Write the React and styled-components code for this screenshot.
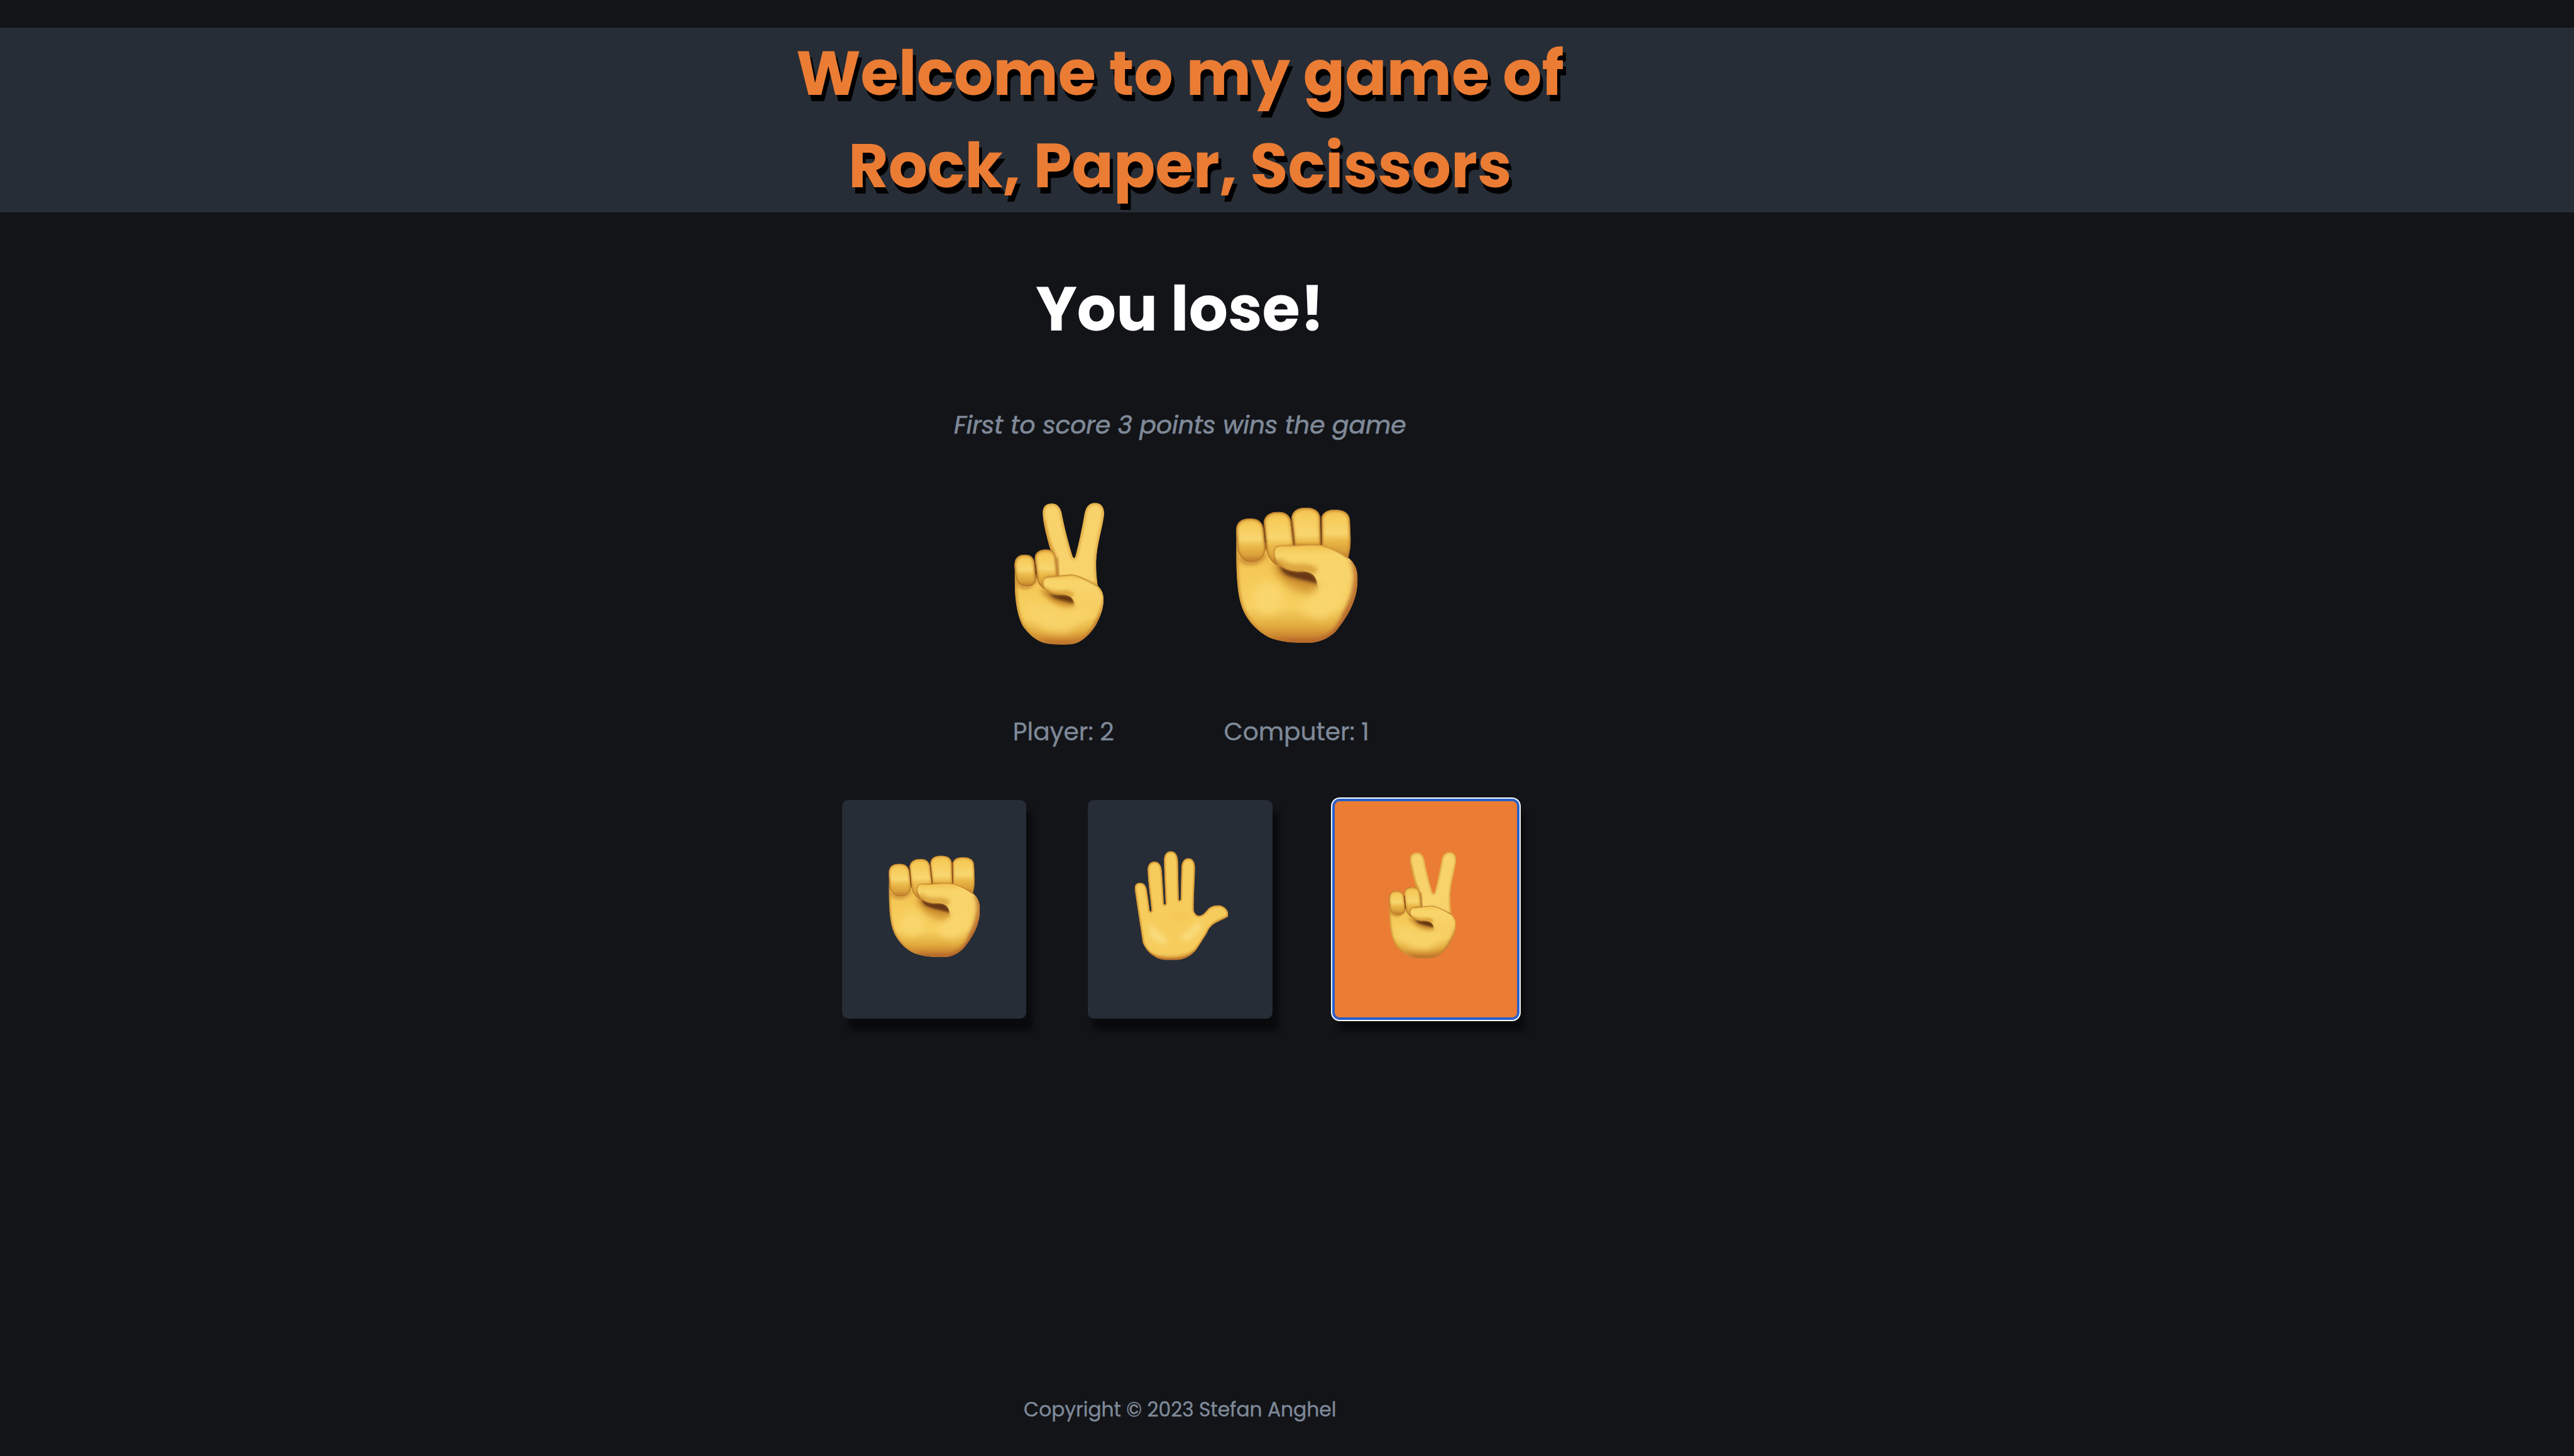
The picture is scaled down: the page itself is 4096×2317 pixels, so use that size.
import React from "react";
import styled, { createGlobalStyle, css } from "styled-components";

const GlobalStyle = createGlobalStyle`
  html { font-size: calc(100vw / 418.6); background: #121418; }
  body { margin: 0; background: #121418; font-family: Poppins, Inter, "Open Sans", sans-serif; }
  *, *::before, *::after { box-sizing: border-box; }
`;

const Page = styled.div`
  display: flex;
  flex-direction: column;
  height: 100vh;
  padding-top: 4.5rem;
  overflow: hidden;
  color: #7f8998;
`;

const Header = styled.header`
  flex: none;
  height: 30rem;
  background: #272d36;
`;

const Title = styled.h1`
  width: 383.8rem;
  margin: 0;
  font-size: 10rem;
  font-weight: 700;
  line-height: 15rem;
  text-align: center;
  color: #eb7c34;
  text-shadow: 0.5rem 1rem 0 #000;
`;

const Main = styled.main`
  display: flex;
  flex: 1;
  flex-direction: column;
  align-items: center;
  width: 383.8rem;
  padding-top: 8.3rem;
`;

const Result = styled.h2`
  margin: 0;
  font-size: 10rem;
  font-weight: 700;
  line-height: 15rem;
  color: #fff;
`;

const Rule = styled.p`
  margin: 8.4rem 0 0;
  font-size: 4rem;
  font-style: italic;
  line-height: 6rem;
  -webkit-text-stroke: 0.07rem currentColor;
`;

const Scoreboard = styled.section`
  display: grid;
  grid-template-columns: repeat(2, 37.9rem);
  margin-top: 5.8rem;
`;

const Contestant = styled.div`
  display: flex;
  flex-direction: column;
  align-items: center;
  gap: 8.15rem;
`;

const Score = styled.p`
  margin: 0;
  font-size: 4rem;
  line-height: 6rem;
  -webkit-text-stroke: 0.04rem currentColor;
`;

const Choices = styled.div`
  display: flex;
  gap: 10rem;
  margin-top: 7.95rem;
`;

const Choice = styled.button`
  display: flex;
  justify-content: center;
  width: 30rem;
  height: 35.6rem;
  padding: 5.6rem 0 0;
  border: 0;
  border-radius: 1rem;
  background: #272d36;
  box-shadow: 1rem 2rem 1rem rgba(0, 0, 0, 0.5);
  ${(p) =>
    p.$active &&
    css`
      background: #eb7c34;
      box-shadow: inset 0 0 0 0.2rem #255fcc, 0 0 0 0.2rem #255fcc, 0 0 0 0.4rem #fff,
        1rem 2rem 1rem rgba(0, 0, 0, 0.5);
    `}
`;

const Footer = styled.footer`
  width: 383.8rem;
  padding-bottom: 5.15rem;
  font-size: 3.2rem;
  line-height: 4.8rem;
  text-align: center;
  -webkit-text-stroke: 0.04rem currentColor;
`;

const Glyph = styled.svg`
  display: block;
  flex: none;
  width: ${(p) => (p.$small ? "22.5rem" : "30rem")};
  height: ${(p) => (p.$small ? "22.5rem" : "30rem")};
`;

function Shades({ id, top, bottom }) {
  return (
    <>
      <linearGradient id={id + "skin"} gradientUnits="userSpaceOnUse" x1="0" x2="0" y1={top} y2={bottom}>
        <stop offset="0" stopColor="#e6ad40" />
        <stop offset="0.35" stopColor="#f5c957" />
        <stop offset="0.68" stopColor="#f6cf60" />
        <stop offset="0.85" stopColor="#e2ac3f" />
        <stop offset="0.94" stopColor="#cd8731" />
        <stop offset="1" stopColor="#b2642a" />
      </linearGradient>
      <linearGradient id={id + "finger"} x1="0" x2="0" y1="0" y2="1">
        <stop offset="0" stopColor="#f0bf4e" />
        <stop offset="0.16" stopColor="#f6cb5a" />
        <stop offset="0.48" stopColor="#f8d66f" />
        <stop offset="0.64" stopColor="#ebb949" />
        <stop offset="0.85" stopColor="#d9a03a" />
        <stop offset="1" stopColor="#b87028" />
      </linearGradient>
      <linearGradient id={id + "long"} x1="0" x2="0" y1="0" y2="1">
        <stop offset="0" stopColor="#f0bf4e" />
        <stop offset="0.2" stopColor="#f6cb5a" />
        <stop offset="0.7" stopColor="#f8d66f" />
        <stop offset="0.88" stopColor="#ecbd4e" />
        <stop offset="1" stopColor="#d39633" />
      </linearGradient>
      {[3, 6, 12, 22].map((b) => (
        <filter key={b} id={id + "b" + b} x="-60%" y="-60%" width="220%" height="220%">
          <feGaussianBlur stdDeviation={b} />
        </filter>
      ))}
    </>
  );
}

function Digit({ id, d, n, shade = "finger" }) {
  const clip = `${id}d${n}`;
  return (
    <g clipPath={`url(#${clip})`}>
      <clipPath id={clip}>
        <path d={d} />
      </clipPath>
      <path d={d} fill={`url(#${id}${shade})`} />
      <path d={d} fill="none" stroke="#cf9132" strokeWidth="15" filter={`url(#${id}b6)`} />
      <path d={d} fill="none" stroke="#93521c" strokeWidth="4" filter={`url(#${id}b3)`} />
    </g>
  );
}

const FIST = {
  palm: "M122 255L122 400C124 480 129 560 146 612C170 690 230 745 285 772C330 790 390 797 430 797L485 797C545 793 590 762 615 732C670 660 714 590 714 480C714 430 690 400 665 380L540 320L300 330L255 300Z",
  fingers: [
    ["M391 195C391 150 425 137 462 137C505 137 530 155 532 190L536 325L406 325Z", "long"],
    ["M537 190C540 160 570 147 602 147C650 147 677 165 677 205L681 290C681 330 675 360 668 385L538 330Z", "finger"],
    ["M256 215C256 175 290 158 325 158C365 158 388 175 391 215L404 325L330 335C310 350 305 390 326 420C290 405 272 370 268 330Z", "finger"],
    ["M121 252C121 205 150 190 190 190C230 190 253 207 257 250L265 330C266 375 235 402 197 402C155 402 135 370 128 340Z", "finger"],
  ],
  gaps: "M257 215L268 345M392 190L405 322M535 180L537 322",
  thumb: "M305 355C305 325 322 320 345 321L410 321C450 316 510 315 540 320C600 335 640 360 668 382C700 405 714 440 714 490C714 560 690 620 650 670C600 690 540 600 516 510C515 475 490 450 455 449C400 452 360 445 330 415C315 400 305 380 305 355Z",
  thumbLine: "M668 384C640 362 600 335 540 320C510 315 450 316 410 321L345 321C322 320 305 325 305 355C305 380 315 400 330 415C360 445 400 452 455 449",
  cavity: "M335 420C370 450 420 452 455 449C495 452 515 480 516 508C480 494 420 486 375 468C350 456 340 440 335 420Z",
  underThumb: "M318 395C350 430 400 436 450 432C475 432 495 440 510 452",
};

function Fist({ id, small }) {
  return (
    <Glyph $small={small} viewBox="-35 0 900 900" role="img" aria-label="rock">
      <defs>
        <Shades id={id} top={250} bottom={797} />
        <clipPath id={id + "palm"}>
          <path d={FIST.palm} />
        </clipPath>
        <clipPath id={id + "thumb"}>
          <path d={FIST.thumb} />
        </clipPath>
        <linearGradient id={id + "fade"} gradientUnits="userSpaceOnUse" x1="0" x2="0" y1="320" y2="640">
          <stop offset="0" stopColor="#f2c24f" />
          <stop offset="0.15" stopColor="#f8d56b" />
          <stop offset="0.5" stopColor="#f8d46b" />
          <stop offset="1" stopColor="#f8d46b" stopOpacity="0" />
        </linearGradient>
      </defs>
      <g clipPath={`url(#${id}palm)`}>
        <path d={FIST.palm} fill={`url(#${id}skin)`} />
        <path d="M300 430C360 530 440 570 530 550L500 480L330 400Z" fill="#d39733" filter={`url(#${id}b22)`} />
        <ellipse cx="275" cy="580" rx="72" ry="80" fill="#f9d66d" filter={`url(#${id}b22)`} />
        <path d="M440 620L640 420L670 480L640 600L550 680L460 660Z" fill="#f9d66d" filter={`url(#${id}b22)`} />
        <path d={FIST.palm} fill="none" stroke="#cf8f31" strokeWidth="18" filter={`url(#${id}b6)`} />
        <path d="M705 400C735 520 695 620 625 728C580 785 530 800 480 804L290 800" fill="none" stroke="#b2642a" strokeWidth="40" filter={`url(#${id}b12)`} />
        <path d="M140 380C160 412 220 422 262 365" fill="none" stroke="#bd7a2a" strokeWidth="18" filter={`url(#${id}b12)`} />
      </g>
      {FIST.fingers.map(([d, shade], i) => (
        <Digit key={i} id={id} n={i} d={d} shade={shade} />
      ))}
      <path d={FIST.gaps} fill="none" stroke="#8a4c1b" strokeWidth="5" filter={`url(#${id}b3)`} />
      <path d={FIST.cavity} fill="#b06a26" stroke="#b87a2c" strokeWidth="22" filter={`url(#${id}b12)`} />
      <path d={FIST.cavity} fill="#683812" filter={`url(#${id}b6)`} />
      <g clipPath={`url(#${id}thumb)`}>
        <path d={FIST.thumb} fill={`url(#${id}fade)`} />
        <path d={FIST.underThumb} fill="none" stroke="#dba43c" strokeWidth="40" filter={`url(#${id}b12)`} />
        <path d="M690 385C722 430 726 560 655 680" fill="none" stroke="#b9702b" strokeWidth="34" filter={`url(#${id}b12)`} />
        <path d={FIST.thumbLine} fill="none" stroke="#b87528" strokeWidth="7" filter={`url(#${id}b3)`} />
      </g>
    </Glyph>
  );
}

const VICTORY = {
  raised: "M285 165C285 130 303 117 330 117C355 117 372 135 378 165C392 240 412 315 431 375Q438 391 445 375C462 310 477 240 490 165C497 130 515 114 540 114C570 114 586 135 585 170C577 240 550 310 546 400C545 450 550 490 554 520L430 475L350 480L340 360L322 340C308 290 288 220 285 165Z",
  palm: "M148 410L149 520C150 600 165 680 193 722C225 765 265 795 310 801C350 807 400 806 430 803C480 795 520 750 545 710C570 665 581 625 582 585C581 550 570 535 553 518L430 465L290 480L240 460Z",
  fingers: [
    ["M246 385C246 352 275 341 300 341C330 341 348 355 350 385L359 475L310 480C290 495 282 510 294 536C270 520 260 505 257 480Z", "finger"],
    ["M147 420C147 380 168 366 197 366C228 366 244 380 247 415L253 480C253 510 230 522 205 522C175 522 158 500 153 480Z", "finger"],
  ],
  thumb: "M284 505C284 480 295 475 315 474C350 473 400 463 430 464C470 468 520 500 553 518C575 540 582 560 582 585C582 630 570 670 540 700C500 690 460 660 438 608C438 580 415 565 395 564C350 566 320 560 300 540C288 528 284 520 284 505Z",
  thumbLine: "M555 520C520 500 470 468 430 464C400 463 350 473 315 474C295 475 284 480 284 505C284 520 288 528 300 540C320 560 350 566 395 564",
  cavity: "M310 548C330 564 365 566 395 564C425 566 438 585 438 605C405 592 360 588 335 573Z",
};

function Victory({ id, small }) {
  return (
    <Glyph $small={small} viewBox="-62 0 900 900" role="img" aria-label="scissors">
      <defs>
        <Shades id={id} top={380} bottom={806} />
        {["raised", "palm", "thumb"].map((k) => (
          <clipPath key={k} id={id + k}>
            <path d={VICTORY[k]} />
          </clipPath>
        ))}
        <linearGradient id={id + "fade"} gradientUnits="userSpaceOnUse" x1="0" x2="0" y1="464" y2="690">
          <stop offset="0" stopColor="#f3c450" />
          <stop offset="0.15" stopColor="#f8d56b" />
          <stop offset="0.5" stopColor="#f7d066" />
          <stop offset="1" stopColor="#f7d066" stopOpacity="0" />
        </linearGradient>
      </defs>
      <g clipPath={`url(#${id}raised)`}>
        <path d={VICTORY.raised} fill="#f8d36c" />
        <path d={VICTORY.raised} fill="none" stroke="#dba43c" strokeWidth="16" filter={`url(#${id}b6)`} />
        <path d="M288 200C300 280 320 330 335 350" fill="none" stroke="#d39530" strokeWidth="16" filter={`url(#${id}b6)`} />
        <path d="M352 380L361 480" fill="none" stroke="#a5641f" strokeWidth="10" filter={`url(#${id}b6)`} />
        <path d="M560 350L560 520" fill="none" stroke="#c98c2e" strokeWidth="22" filter={`url(#${id}b12)`} />
      </g>
      <g clipPath={`url(#${id}palm)`}>
        <path d={VICTORY.palm} fill={`url(#${id}skin)`} />
        <path d="M270 540C320 605 380 635 440 620L410 570L300 530Z" fill="#d49a36" filter={`url(#${id}b12)`} />
        <path d="M200 600C260 580 380 680 440 640L500 600L500 680L400 750L300 740L220 680Z" fill="#f8d369" filter={`url(#${id}b22)`} />
        <path d={VICTORY.palm} fill="none" stroke="#cf9030" strokeWidth="17" filter={`url(#${id}b6)`} />
        <path d="M592 580C582 680 520 795 430 812L280 806" fill="none" stroke="#b86c29" strokeWidth="22" filter={`url(#${id}b12)`} />
        <path d="M155 500C180 540 220 540 255 490" fill="none" stroke="#c98a30" strokeWidth="12" filter={`url(#${id}b6)`} />
      </g>
      {VICTORY.fingers.map(([d, shade], i) => (
        <Digit key={i} id={id} n={i} d={d} shade={shade} />
      ))}
      <path d="M247 400L256 485" fill="none" stroke="#8a4c1b" strokeWidth="5" filter={`url(#${id}b3)`} />
      <path d={VICTORY.cavity} fill="#a7651f" stroke="#b87a2c" strokeWidth="12" filter={`url(#${id}b12)`} />
      <path d={VICTORY.cavity} fill="#643611" filter={`url(#${id}b6)`} />
      <g clipPath={`url(#${id}thumb)`}>
        <path d={VICTORY.thumb} fill={`url(#${id}fade)`} />
        <path d="M294 535C320 556 350 558 395 554C410 554 422 560 432 568" fill="none" stroke="#dfa840" strokeWidth="26" filter={`url(#${id}b6)`} />
        <path d="M560 518C582 540 590 560 590 585C590 630 574 674 544 706" fill="none" stroke="#cf8f30" strokeWidth="18" filter={`url(#${id}b6)`} />
        <path d={VICTORY.thumbLine} fill="none" stroke="#b07026" strokeWidth="7" filter={`url(#${id}b3)`} />
      </g>
    </Glyph>
  );
}

const HAND =
  "M315 525C315 505 325 496 340 496C358 496 370 508 374 530C380 570 386 610 388 632Q393 642 397 632C392 570 380 500 378 435C378 408 392 393 411 393C432 393 445 410 447 438C452 500 455 560 457 598Q461 608 466 598C464 540 459 450 458 385C458 358 472 342 491 342C510 342 524 358 526 388L530 578Q534 588 539 578L543 420C545 393 558 377 577 377C597 377 609 395 609 422C609 480 602 560 603 630C608 650 620 658 630 657C650 655 660 638 675 622C690 608 710 605 730 607C752 611 768 628 771 645L771 660C755 672 725 682 705 695C685 708 675 722 668 740C650 770 630 800 617 820C595 850 560 870 520 873L460 873C420 868 375 840 355 790C345 720 325 600 315 525Z";

function Hand({ id, small }) {
  return (
    <Glyph $small={small} viewBox="199.5 261 675 675" role="img" aria-label="paper">
      <defs>
        <Shades id={id} top={0} bottom={873} />
        <clipPath id={id + "hand"}>
          <path d={HAND} />
        </clipPath>
      </defs>
      <g clipPath={`url(#${id}hand)`}>
        <path d={HAND} fill="#f6cd5d" />
        <path d="M380 690L480 780L450 800L390 760Z" fill="#f9da7c" filter={`url(#${id}b12)`} />
        <path d="M630 680L530 770L580 780L640 720Z" fill="#f9da7c" filter={`url(#${id}b12)`} />
        <ellipse cx="535" cy="660" rx="50" ry="20" fill="#f5c654" filter={`url(#${id}b12)`} />
        <path d="M345 822C400 876 600 876 645 795L705 696L771 662L771 900L340 900Z" fill="#cf8a2e" filter={`url(#${id}b12)`} />
        <path d={HAND} fill="none" stroke="#d08f2e" strokeWidth="12" filter={`url(#${id}b3)`} />
        <path d="M360 835C430 888 560 888 615 835" fill="none" stroke="#ad5f26" strokeWidth="14" filter={`url(#${id}b6)`} />
        <path d="M775 640L775 665" fill="none" stroke="#a85e24" strokeWidth="14" filter={`url(#${id}b3)`} />
      </g>
    </Glyph>
  );
}

export default function App() {
  return (
    <Page>
      <GlobalStyle />
      <Header>
        <Title>
          Welcome to my game of
          <br />
          Rock, Paper, Scissors
        </Title>
      </Header>
      <Main>
        <Result>You lose!</Result>
        <Rule>First to score 3 points wins the game</Rule>
        <Scoreboard>
          <Contestant>
            <Victory id="pv" />
            <Score>Player: 2</Score>
          </Contestant>
          <Contestant>
            <Fist id="cf" />
            <Score>Computer: 1</Score>
          </Contestant>
        </Scoreboard>
        <Choices>
          <Choice>
            <Fist id="bf" small />
          </Choice>
          <Choice>
            <Hand id="bh" small />
          </Choice>
          <Choice $active>
            <Victory id="bv" small />
          </Choice>
        </Choices>
      </Main>
      <Footer>Copyright © 2023 Stefan Anghel</Footer>
    </Page>
  );
}
